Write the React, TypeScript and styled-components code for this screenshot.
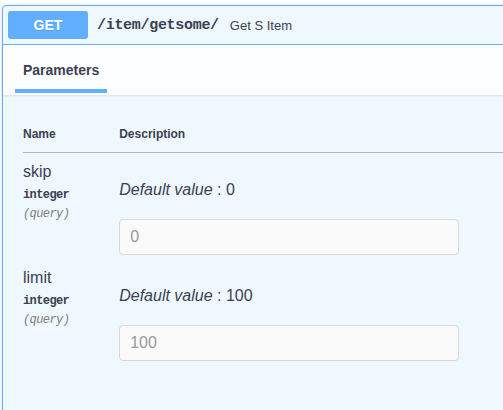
import styled, { createGlobalStyle } from "styled-components"

const GlobalStyle = createGlobalStyle`
  html, body {
    margin: 0;
    overflow: hidden;
    background: #fff;
  }
  body {
    padding: 5px 0 0 2px;
    font-family: "Liberation Sans", Arial, sans-serif;
    color: #3b4151;
  }
`

const Opblock = styled.div`
  width: 523px;
  min-height: 420px;
  border: 1px solid #61affe;
  border-radius: 4px;
  background: rgba(97, 175, 254, 0.1);
  box-shadow: 0 0 3px rgba(0, 0, 0, 0.19);
  box-sizing: border-box;
`

const Summary = styled.div`
  display: flex;
  align-items: center;
  padding: 5px;
  border-bottom: 1px solid #61affe;
`

const Method = styled.span`
  min-width: 80px;
  height: 28px;
  line-height: 28px;
  border-radius: 3px;
  background: #61affe;
  color: #fff;
  font-size: 14px;
  font-weight: 700;
  text-align: center;
  text-shadow: 0 1px 0 rgba(0, 0, 0, 0.1);
`

const Path = styled.span`
  padding: 0 11px 0 9px;
  font-family: "Liberation Mono", monospace;
  font-size: 15px;
  letter-spacing: -0.3px;
  font-weight: 700;
  color: #3b4151;
`

const SummaryDescription = styled.span`
  font-size: 13px;
  color: #3b4151;
`

const SectionHeader = styled.div`
  display: flex;
  height: 50px;
  padding: 0 12px;
  background: rgba(255, 255, 255, 0.8);
  box-shadow: 0 1px 2px rgba(0, 0, 0, 0.1);
`

const Tab = styled.div<{ $active?: boolean }>`
  position: relative;
  display: flex;
  align-items: center;
  padding: 0 8px;
  font-size: 14px;
  font-weight: 700;
  color: #3b4151;

  &::after {
    content: "";
    display: ${p => (p.$active ? "block" : "none")};
    position: absolute;
    left: 0;
    right: 0;
    bottom: 2px;
    height: 4px;
    background: #61affe;
  }
`

const TableContainer = styled.div`
  padding: 20px;
`

const Table = styled.table`
  width: 100%;
  border-collapse: collapse;
`

const HeadCell = styled.th<{ $width?: string }>`
  width: ${p => p.$width ?? "auto"};
  padding: 12px 0 11px;
  text-align: left;
  font-size: 12px;
  font-weight: 700;
  color: #3b4151;
  border-bottom: 1px solid rgba(59, 65, 81, 0.2);
`

const Cell = styled.td`
  padding: 10px 0 0;
  vertical-align: top;
`

const ParamName = styled.div`
  font-size: 16px;
  color: #3b4151;
`

const ParamType = styled.div`
  padding: 7px 0 5px;
  font-family: "Liberation Mono", monospace;
  font-size: 12px;
  letter-spacing: -0.6px;
  font-weight: 700;
  color: #3b4151;
`

const ParamIn = styled.div`
  font-family: "Liberation Mono", monospace;
  font-size: 12px;
  letter-spacing: -0.6px;
  font-style: italic;
  color: gray;
`

const Default = styled.p`
  margin: 18px 0 20px;
  font-size: 16px;
  line-height: 18px;
  color: #3b4151;

  i {
    font-style: italic;
  }
`

const Input = styled.input`
  display: block;
  width: 340px;
  height: 36px;
  margin: 5px 0 4px;
  padding: 8px 10px;
  box-sizing: border-box;
  border: 1px solid #d9d9d9;
  border-radius: 4px;
  background: #fafafa;
  font-family: "Liberation Sans", Arial, sans-serif;
  font-size: 16px;
  color: #888;

  &::placeholder {
    color: #999;
  }
`

interface Param {
  name: string
  type: string
  location: string
  defaultValue: string
}

const params: Param[] = [
  { name: "skip", type: "integer", location: "query", defaultValue: "0" },
  { name: "limit", type: "integer", location: "query", defaultValue: "100" },
]

export default function App() {
  return (
    <>
      <GlobalStyle />
      <Opblock>
        <Summary>
          <Method>GET</Method>
          <Path>/item/getsome/</Path>
          <SummaryDescription>Get S Item</SummaryDescription>
        </Summary>
        <SectionHeader>
          <Tab $active>Parameters</Tab>
        </SectionHeader>
        <TableContainer>
          <Table>
            <thead>
              <tr>
                <HeadCell $width="20%">Name</HeadCell>
                <HeadCell>Description</HeadCell>
              </tr>
            </thead>
            <tbody>
              {params.map(p => (
                <tr key={p.name}>
                  <Cell>
                    <ParamName>{p.name}</ParamName>
                    <ParamType>{p.type}</ParamType>
                    <ParamIn>({p.location})</ParamIn>
                  </Cell>
                  <Cell>
                    <Default>
                      <i>Default value</i> : {p.defaultValue}
                    </Default>
                    <Input type="text" placeholder={p.defaultValue} disabled />
                  </Cell>
                </tr>
              ))}
            </tbody>
          </Table>
        </TableContainer>
      </Opblock>
    </>
  )
}
